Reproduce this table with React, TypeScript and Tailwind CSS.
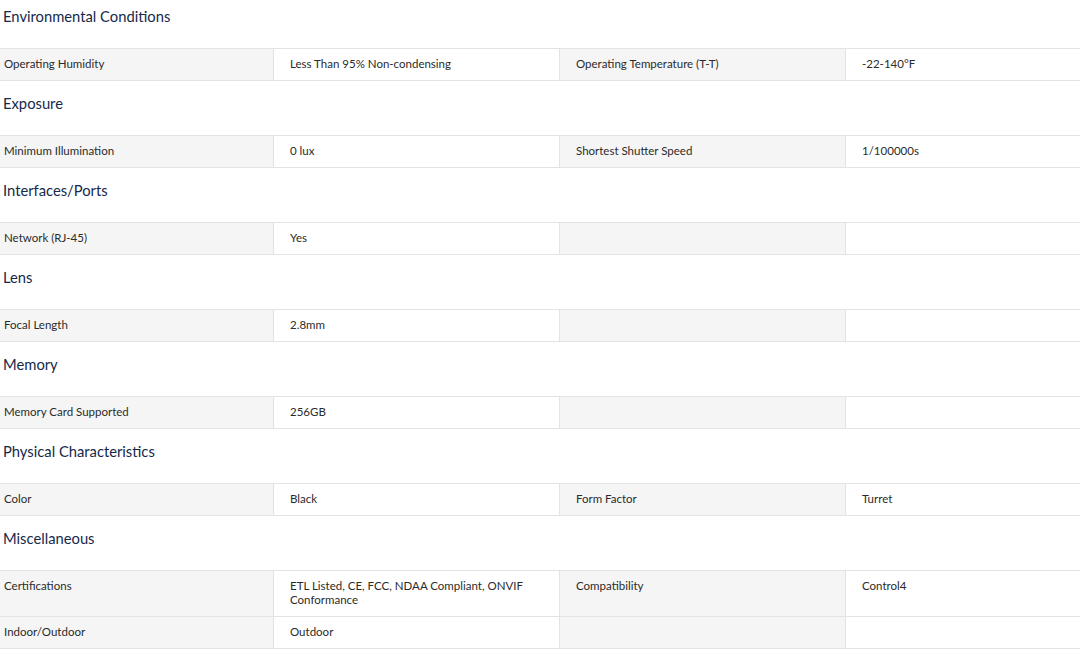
import React from "react";

type Row = [string, string, string, string];
type Section = { title: string; rows: Row[] };

const sections: Section[] = [
  {
    title: "Environmental Conditions",
    rows: [["Operating Humidity", "Less Than 95% Non-condensing", "Operating Temperature (T-T)", "-22-140°F"]],
  },
  { title: "Exposure", rows: [["Minimum Illumination", "0 lux", "Shortest Shutter Speed", "1/100000s"]] },
  { title: "Interfaces/Ports", rows: [["Network (RJ-45)", "Yes", "", ""]] },
  { title: "Lens", rows: [["Focal Length", "2.8mm", "", ""]] },
  { title: "Memory", rows: [["Memory Card Supported", "256GB", "", ""]] },
  { title: "Physical Characteristics", rows: [["Color", "Black", "Form Factor", "Turret"]] },
  {
    title: "Miscellaneous",
    rows: [
      ["Certifications", "ETL Listed, CE, FCC, NDAA Compliant, ONVIF Conformance", "Compatibility", "Control4"],
      ["Indoor/Outdoor", "Outdoor", "", ""],
    ],
  },
];

export default function App() {
  return (
    <div
      className="w-[1080px] h-[659px] overflow-hidden bg-white"
      style={{ fontFamily: "Lato, 'Open Sans', sans-serif" }}
    >
      <div className="-mt-[6px]">
        {sections.map((s) => (
          <div key={s.title}>
            <div className="h-[54px] pt-[12px] pl-[3px] text-[14.75px] leading-[20px] text-[#15294b]">{s.title}</div>
            <div className="border-t border-[#e3e3e3]">
              {s.rows.map((r, i) => (
                <div
                  key={i}
                  className="grid grid-cols-[273px_286px_286px_1fr] border-b border-[#e3e3e3] text-[11.5px] leading-[14px] text-[#2b2b2b]"
                >
                  <div className="bg-[#f5f5f5] pl-[4px] pr-2 pt-[8px] pb-[9px]">{r[0]}</div>
                  <div className="border-l border-[#e3e3e3] pl-[16px] pr-[16px] pt-[8px] pb-[9px]">{r[1]}</div>
                  <div className="border-l border-[#e3e3e3] bg-[#f5f5f5] pl-[16px] pr-[16px] pt-[8px] pb-[9px]">{r[2]}</div>
                  <div className="border-l border-[#e3e3e3] pl-[16px] pr-[16px] pt-[8px] pb-[9px]">{r[3]}</div>
                </div>
              ))}
            </div>
          </div>
        ))}
      </div>
    </div>
  );
}
